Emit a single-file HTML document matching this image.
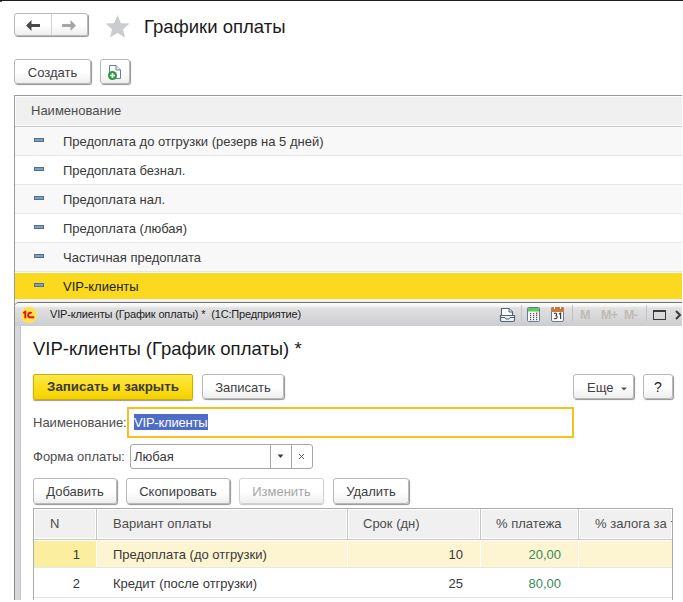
<!DOCTYPE html>
<html><head><meta charset="utf-8">
<style>
*{margin:0;padding:0;box-sizing:border-box}
html,body{width:683px;height:602px;overflow:hidden;background:#fff;font-family:"Liberation Sans",sans-serif;font-size:13px;color:#383838}
.a{position:absolute}
.btn{position:absolute;border:1px solid #b8b8b8;border-radius:3px;background:linear-gradient(#fff,#fff 50%,#efefef);box-shadow:1px 1px 1px #939393;text-align:center;line-height:25px;color:#404040}
.t{position:absolute;white-space:nowrap;line-height:15px}
</style></head><body>
<div class="a" style="left:0;top:0;width:683px;height:1px;background:#1e1e1e"></div>
<div class="a" style="left:0;top:1px;width:2px;height:1px;background:#555"></div>

<!-- nav -->
<div class="btn" style="left:14px;top:13px;width:74px;height:23px"></div>
<div class="a" style="left:51px;top:14px;width:1px;height:21px;background:#d6d6d6"></div>
<svg class="a" style="left:26px;top:20px" width="15" height="11" viewBox="0 0 15 11"><path d="M0 5.5 L5.5 0 V4 H14 V7 H5.5 V11 Z" fill="#4a4a4a"/></svg>
<svg class="a" style="left:62px;top:20px" width="14" height="11" viewBox="0 0 14 11"><path d="M14 5.5 L8.5 0 V4 H0 V7 H8.5 V11 Z" fill="#a6a6a6"/></svg>
<svg class="a" style="left:105px;top:15px" width="25" height="23" viewBox="0 0 25 23"><path d="M12.5 0 L15.9 8.2 L24.5 8.5 L18 14.2 L20 22.6 L12.5 18 L5 22.6 L7 14.2 L0.5 8.5 L9.1 8.2 Z" fill="#cbccd0"/></svg>
<div class="t" style="left:144px;top:16px;font-size:18.5px;line-height:21px;color:#1a1a1a">Графики оплаты</div>

<!-- toolbar -->
<div class="btn" style="left:14px;top:59px;width:77px;height:25px">Создать</div>
<div class="btn" style="left:100px;top:59px;width:30px;height:25px"></div>
<svg class="a" style="left:107px;top:64px" width="16" height="17" viewBox="0 0 16 17">
<path d="M2.5 1.5 H9 L13.5 6 V14.5 H2.5 Z" fill="#fff" stroke="#6a7fa0" stroke-width="1"/>
<path d="M9 1.5 V6 H13.5" fill="#e8eef5" stroke="#6a7fa0" stroke-width="1"/>
<circle cx="5.5" cy="11.5" r="4.5" fill="#2a9a3a"/>
<path d="M5.5 9 V14 M3 11.5 H8" stroke="#fff" stroke-width="1.6"/>
</svg>

<!-- list table -->
<div class="a" style="left:14px;top:95px;width:668px;height:1px;background:#979d97"></div>
<div class="a" style="left:14px;top:95px;width:1px;height:210px;background:#979d97"></div>
<div class="a" style="left:15px;top:96px;width:667px;height:30px;background:#f0f0f0;border:1px solid #fff;border-right:0"></div>
<div class="a" style="left:15px;top:126px;width:667px;height:1px;background:#c8c8c8"></div>
<div class="t" style="left:31px;top:103px;color:#4d4d4d">Наименование</div>

<div class="a" style="left:15px;top:127px;width:667px;height:28px;background:#f8f8f8"></div>
<div class="a" style="left:15px;top:155px;width:667px;height:1px;background:#e6e6e6"></div>
<div class="a" style="left:15px;top:184px;width:667px;height:1px;background:#e6e6e6"></div>
<div class="a" style="left:15px;top:185px;width:667px;height:28px;background:#f8f8f8"></div>
<div class="a" style="left:15px;top:213px;width:667px;height:1px;background:#e6e6e6"></div>
<div class="a" style="left:15px;top:242px;width:667px;height:1px;background:#e6e6e6"></div>
<div class="a" style="left:15px;top:243px;width:667px;height:28px;background:#f8f8f8"></div>
<div class="a" style="left:15px;top:271px;width:667px;height:1px;background:#e6e6e6"></div>
<div class="a" style="left:15px;top:273px;width:667px;height:26px;background:#fbd91e"></div>

<div class="a" style="left:34px;top:138px;width:10px;height:4px;background:#7f9fbf;border:1px solid #4f7090"></div>
<div class="a" style="left:34px;top:167px;width:10px;height:4px;background:#7f9fbf;border:1px solid #4f7090"></div>
<div class="a" style="left:34px;top:196px;width:10px;height:4px;background:#7f9fbf;border:1px solid #4f7090"></div>
<div class="a" style="left:34px;top:225px;width:10px;height:4px;background:#7f9fbf;border:1px solid #4f7090"></div>
<div class="a" style="left:34px;top:254px;width:10px;height:4px;background:#7f9fbf;border:1px solid #4f7090"></div>
<div class="a" style="left:34px;top:283px;width:10px;height:4px;background:#7f9fbf;border:1px solid #4f7090"></div>

<div class="t" style="left:63px;top:134px">Предоплата до отгрузки (резерв на 5 дней)</div>
<div class="t" style="left:63px;top:163px">Предоплата безнал.</div>
<div class="t" style="left:63px;top:192px">Предоплата нал.</div>
<div class="t" style="left:63px;top:221px">Предоплата (любая)</div>
<div class="t" style="left:63px;top:250px">Частичная предоплата</div>
<div class="t" style="left:63px;top:279px;color:#222">VIP-клиенты</div>

<!-- modal window -->
<div class="a" style="left:15px;top:299px;width:667px;height:3px;background:#eef2f6"></div>
<div class="a" style="left:14px;top:302px;width:668px;height:298px;background:#d6d8db;border-top-left-radius:5px;border-top:1px solid #707070;border-left:1px solid #8a8a8a"></div>
<div class="a" style="left:15px;top:303px;width:667px;height:23px;background:linear-gradient(#fdfdfd,#f6f6f6 3px,#e0e0e1 5px,#d8d8da 14px,#cbcccf);border-top-left-radius:4px"></div>
<div class="a" style="left:20px;top:326px;width:1px;height:274px;background:#c4c6c9"></div>
<div class="a" style="left:21px;top:326px;width:661px;height:274px;background:#fff"></div>
<svg class="a" style="left:20px;top:306px" width="18" height="18" viewBox="0 0 18 18">
<circle cx="9" cy="9" r="7.8" fill="#fde24a" stroke="#f6e27a" stroke-width="0.8"/>
<path d="M3.2 7 L5.3 5.8 V12.2" stroke="#e41010" stroke-width="1.9" fill="none"/>
<path d="M11.8 7 A2.4 2.4 0 1 0 9.4 11.2 H14.2" stroke="#e41010" stroke-width="1.9" fill="none"/>
</svg>
<div class="t" style="left:50px;top:308px;font-size:11px;line-height:13px;color:#222;letter-spacing:-0.15px">VIP-клиенты (График оплаты) *&nbsp; (1С:Предприятие)</div>


<!-- title icons -->
<svg class="a" style="left:499px;top:307px" width="17" height="16" viewBox="0 0 17 16">
<path d="M2.5 1.5 H10 L13.5 5 V8.5 H2.5 Z" fill="#fff" stroke="#56647a" stroke-width="1.2"/>
<path d="M10 1.5 V5 H13.5" fill="#dfe6ee" stroke="#56647a" stroke-width="1"/>
<path d="M1.5 8.5 H15.5 V13 Q15.5 14.5 14 14.5 H3 Q1.5 14.5 1.5 13 Z" fill="#eef1f4" stroke="#56647a" stroke-width="1.2"/>
<path d="M2 10.5 H6 L7 12 H10 L11 10.5 H15" stroke="#56647a" stroke-width="1" fill="none"/>
</svg>
<div class="a" style="left:521px;top:305px;width:1px;height:16px;background:#c0c2c6"></div>
<svg class="a" style="left:527px;top:307px" width="14" height="16" viewBox="0 0 14 16">
<rect x="0.5" y="0.5" width="12" height="14" rx="1" fill="#f6f6f6" stroke="#6a7a8a" stroke-width="1"/>
<rect x="1" y="1" width="11" height="3.5" fill="#5ccc5c"/>
<g fill="#4a5560">
<rect x="3" y="6" width="1.2" height="1.2"/><rect x="6" y="6" width="1.2" height="1.2"/>
<rect x="3" y="8" width="1.2" height="1.2"/><rect x="6" y="8" width="1.2" height="1.2"/><rect x="9" y="8" width="1.2" height="1.2"/>
<rect x="3" y="10" width="1.2" height="1.2"/><rect x="6" y="10" width="1.2" height="1.2"/><rect x="9" y="10" width="1.2" height="1.2"/>
<rect x="3" y="12" width="1.2" height="1.2"/><rect x="6" y="12" width="1.2" height="1.2"/><rect x="9" y="12" width="1.2" height="1.2"/>
</g>
<rect x="9" y="5.5" width="1.3" height="2" fill="#e03030"/>
</svg>
<svg class="a" style="left:550px;top:306px" width="15" height="17" viewBox="0 0 15 17">
<rect x="1.5" y="1.5" width="12" height="14" rx="1.5" fill="#fff" stroke="#6a7a8a" stroke-width="1"/>
<path d="M1 6 V3 Q1 1 3 1 H12 Q14 1 14 3 V6 Z" fill="#c47a40"/>
<rect x="4" y="1" width="1" height="2" fill="#fff"/><rect x="10" y="1" width="1" height="2" fill="#fff"/>
<path d="M3.9 7.6 Q5.2 6.8 6.3 7.4 Q7.2 8.2 6.2 9.6 Q7.6 10.2 7 11.9 Q5.8 13.3 3.8 12.4 M5.3 9.8 H6" stroke="#3a3a3a" stroke-width="1.1" fill="none"/><path d="M8.9 8.3 L10.6 7.1 V13.1" stroke="#3a3a3a" stroke-width="1.2" fill="none"/>
</svg>
<div class="a" style="left:572px;top:305px;width:1px;height:16px;background:#c0c2c6"></div>
<div class="t" style="left:580px;top:308px;font-size:12.5px;line-height:14px;font-weight:bold;color:#c2bab3">M</div>
<div class="t" style="left:601px;top:308px;font-size:12.5px;line-height:14px;font-weight:bold;color:#c2bab3;letter-spacing:-0.6px">M+</div>
<div class="t" style="left:624px;top:308px;font-size:12.5px;line-height:14px;font-weight:bold;color:#c2bab3;letter-spacing:-0.6px">M-</div>
<div class="a" style="left:646px;top:305px;width:1px;height:16px;background:#c0c2c6"></div>
<div class="a" style="left:653px;top:310px;width:13px;height:10px;border:1.5px solid #3a3a3a;border-top-width:2px"></div>
<svg class="a" style="left:675px;top:310px" width="8" height="10" viewBox="0 0 8 10"><path d="M1 1 L5 5 L1 9" stroke="#3a3a3a" stroke-width="2" fill="none"/></svg>
<div class="t" style="left:33px;top:338px;font-size:18.5px;line-height:21px;color:#1a1a1a">VIP-клиенты (График оплаты) *</div>

<div class="a" style="left:33px;top:374px;width:160px;height:26px;border:1px solid #cfae00;border-radius:2px;background:linear-gradient(#fde84e,#fbdf1a 50%,#f3d000);box-shadow:0 1px 1px #9a9a9a;font-weight:bold;font-size:13.3px;line-height:24px;text-align:center;color:#3a3a3a">Записать и закрыть</div>
<div class="btn" style="left:202px;top:374px;width:82px;height:25px">Записать</div>
<div class="btn" style="left:573px;top:374px;width:61px;height:25px;text-align:left;padding-left:13px">Еще</div>
<svg class="a" style="left:621px;top:387px" width="6" height="4" viewBox="0 0 6 4"><path d="M0 0.5 H6 L3 3.5 Z" fill="#555"/></svg>
<div class="btn" style="left:643px;top:374px;width:30px;height:25px;color:#1a1a1a;font-size:14px">?</div>

<div class="t" style="left:33px;top:415px;color:#4d4d4d">Наименование:</div>
<div class="a" style="left:127px;top:407px;width:447px;height:31px;border:2px solid #f3c31c"></div>
<div class="a" style="left:134px;top:414px;width:74px;height:16px;background:#4f6dc8"></div>
<div class="t" style="left:134px;top:415px;color:#fff;letter-spacing:-0.2px">VIP-клиенты</div>

<div class="t" style="left:33px;top:449px;color:#4d4d4d">Форма оплаты:</div>
<div class="a" style="left:130px;top:444px;width:183px;height:25px;border:1px solid #a4a8a4;border-radius:3px"></div>
<div class="t" style="left:134px;top:449px">Любая</div>
<div class="a" style="left:270px;top:445px;width:1px;height:23px;background:#a4a8a4"></div>
<div class="a" style="left:291px;top:445px;width:1px;height:23px;background:#a4a8a4"></div>
<svg class="a" style="left:277px;top:454px" width="7" height="5" viewBox="0 0 7 5"><path d="M0.5 0.5 H6.5 L3.5 4 Z" fill="#404040"/></svg>
<svg class="a" style="left:298px;top:453px" width="7" height="7" viewBox="0 0 7 7"><path d="M1 1 L6 6 M6 1 L1 6" stroke="#505050" stroke-width="0.9"/></svg>


<div class="btn" style="left:33px;top:478px;width:84px;height:26px">Добавить</div>
<div class="btn" style="left:126px;top:478px;width:104px;height:26px">Скопировать</div>
<div class="btn" style="left:239px;top:478px;width:85px;height:26px;color:#a6a6a6;border-color:#d2d2d2;box-shadow:0 1px 1px #c8c8c8">Изменить</div>
<div class="btn" style="left:333px;top:478px;width:76px;height:26px">Удалить</div>

<!-- modal table -->
<div class="a" style="left:33px;top:508px;width:640px;height:92px;border:1px solid #a8aca8;border-bottom:0"></div>
<div class="a" style="left:34px;top:509px;width:638px;height:30px;background:#f0f0f0;border:1px solid #fff;border-bottom:0"></div>
<div class="a" style="left:34px;top:538px;width:638px;height:1px;background:#fff"></div>
<div class="a" style="left:34px;top:539px;width:638px;height:1px;background:#c8c8c8"></div>
<div class="a" style="left:96px;top:509px;width:1px;height:30px;background:#c4c4c4"></div>
<div class="a" style="left:95px;top:509px;width:1px;height:30px;background:#fff"></div>
<div class="a" style="left:97px;top:509px;width:1px;height:30px;background:#fff"></div>
<div class="a" style="left:347px;top:509px;width:1px;height:30px;background:#c4c4c4"></div>
<div class="a" style="left:346px;top:509px;width:1px;height:30px;background:#fff"></div>
<div class="a" style="left:348px;top:509px;width:1px;height:30px;background:#fff"></div>
<div class="a" style="left:480px;top:509px;width:1px;height:30px;background:#c4c4c4"></div>
<div class="a" style="left:479px;top:509px;width:1px;height:30px;background:#fff"></div>
<div class="a" style="left:481px;top:509px;width:1px;height:30px;background:#fff"></div>
<div class="a" style="left:578px;top:509px;width:1px;height:30px;background:#c4c4c4"></div>
<div class="a" style="left:577px;top:509px;width:1px;height:30px;background:#fff"></div>
<div class="a" style="left:579px;top:509px;width:1px;height:30px;background:#fff"></div>
<div class="a" style="left:34px;top:541px;width:62px;height:26px;background:#fbef9f"></div>
<div class="a" style="left:97px;top:541px;width:575px;height:26px;background:#fdf5d2"></div>
<div class="a" style="left:347px;top:541px;width:1px;height:26px;background:#fff"></div>
<div class="a" style="left:480px;top:541px;width:1px;height:26px;background:#fff"></div>
<div class="a" style="left:578px;top:541px;width:1px;height:26px;background:#fff"></div>
<div class="a" style="left:34px;top:567px;width:638px;height:1px;background:#e4e8ec"></div>
<div class="a" style="left:34px;top:597px;width:638px;height:1px;background:#e4e4e4"></div>
<div class="t" style="left:50px;top:516px;color:#4d4d4d">N</div>
<div class="t" style="left:113px;top:516px;color:#4d4d4d">Вариант оплаты</div>
<div class="t" style="left:363px;top:516px;color:#4d4d4d">Срок (дн)</div>
<div class="t" style="left:496px;top:516px;color:#4d4d4d">% платежа</div>
<div class="t" style="left:595px;top:516px;color:#4d4d4d;width:77px;overflow:hidden">% залога за т</div>
<div class="t" style="left:40px;top:547px;width:40px;text-align:right">1</div>
<div class="t" style="left:113px;top:547px">Предоплата (до отгрузки)</div>
<div class="t" style="left:400px;top:547px;width:63px;text-align:right">10</div>
<div class="t" style="left:500px;top:547px;width:61px;text-align:right;color:#3a8a5a">20,00</div>
<div class="t" style="left:40px;top:576px;width:40px;text-align:right">2</div>
<div class="t" style="left:113px;top:576px">Кредит (после отгрузки)</div>
<div class="t" style="left:400px;top:576px;width:63px;text-align:right">25</div>
<div class="t" style="left:500px;top:576px;width:61px;text-align:right;color:#3a8a5a">80,00</div>
</body></html>
